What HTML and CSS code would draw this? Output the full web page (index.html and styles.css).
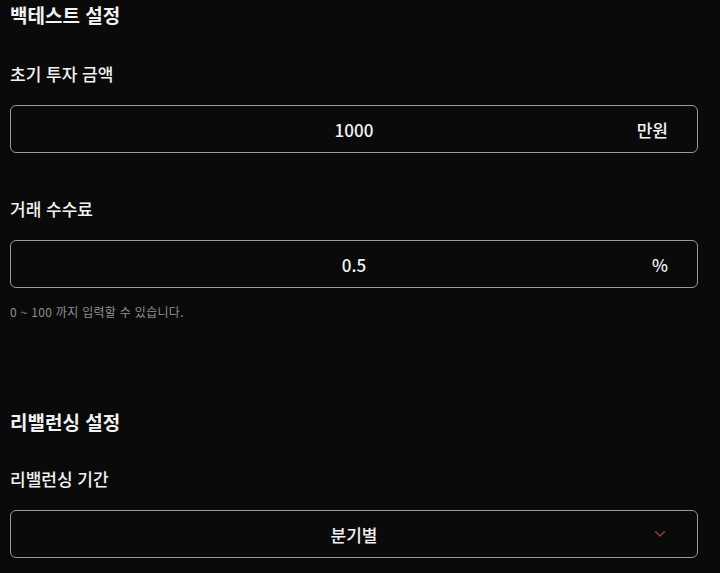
FILE: index.html
```html
<!DOCTYPE html>
<html lang="ko">
<head>
<meta charset="utf-8">
<link rel="stylesheet" href="styles.css">
</head>
<body>
<main class="page">
  <section class="section">
    <h2 class="section-title">백테스트 설정</h2>
    <div class="field field-first">
      <label class="field-label">초기 투자 금액</label>
      <div class="input-box">
        <span class="input-value">1000</span>
        <span class="input-unit">만원</span>
      </div>
    </div>
    <div class="field field-gap">
      <label class="field-label">거래 수수료</label>
      <div class="input-box">
        <span class="input-value">0.5</span>
        <span class="input-unit">%</span>
      </div>
      <p class="helper">0 ~ 100 까지 입력할 수 있습니다.</p>
    </div>
  </section>
  <section class="section section-second">
    <h2 class="section-title">리밸런싱 설정</h2>
    <div class="field field-first2">
      <label class="field-label">리밸런싱 기간</label>
      <div class="input-box">
        <span class="input-value">분기별</span>
        <svg class="chevron" width="12" height="8" viewBox="0 0 12 8" aria-hidden="true">
          <path d="M1.5 1.5 L6 6 L10.5 1.5" fill="none" stroke="#8a3b34" stroke-width="1.6" stroke-linecap="round" stroke-linejoin="round"/>
        </svg>
      </div>
    </div>
  </section>
</main>
</body>
</html>
```

FILE: styles.css
```css
html, body {
  margin: 0;
  padding: 0;
  background: #0a0a0a;
  color: #f2f2f2;
  font-family: "Noto Sans CJK KR", "Noto Sans", sans-serif;
}

.page {
  width: 688px;
  padding: 2px 0 0 10px;
  display: flex;
  flex-direction: column;
}

.section {
  display: flex;
  flex-direction: column;
}

.section-second {
  margin-top: 89px;
}

.section-title {
  margin: 0;
  font-size: 19px;
  font-weight: 700;
  line-height: 26px;
  height: 26px;
}

.field {
  display: flex;
  flex-direction: column;
}

.field-first {
  margin-top: 34px;
}

.field-first2 {
  margin-top: 32px;
}

.field-gap {
  margin-top: 44px;
}

.field-label {
  font-size: 17px;
  font-weight: 500;
  line-height: 24px;
  height: 24px;
  margin-bottom: 19px;
}

.input-box {
  position: relative;
  box-sizing: border-box;
  height: 48px;
  border: 1px solid #9a9a9a;
  border-radius: 6px;
  display: flex;
  align-items: center;
  justify-content: center;
}

.input-value {
  font-size: 17px;
  font-weight: 500;
  color: #f2f2f2;
}

.input-unit {
  position: absolute;
  right: 29px;
  top: 50%;
  transform: translateY(-50%);
  font-size: 17px;
  font-weight: 500;
  color: #f2f2f2;
}

.chevron {
  position: absolute;
  right: 31px;
  top: 50%;
  transform: translateY(-50%);
}

.helper {
  margin: 16px 0 0;
  font-size: 12px;
  letter-spacing: 0.3px;
  line-height: 16px;
  color: #8f8f8f;
}
```
